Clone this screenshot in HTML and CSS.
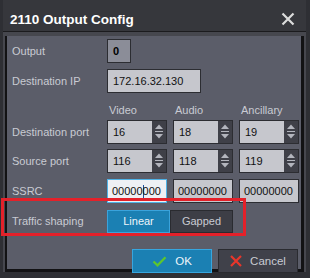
FILE: index.html
```html
<!DOCTYPE html>
<html lang="en">
  <head>
    <meta charset="UTF-8" />
    <meta name="viewport" content="width=device-width, initial-scale=1.0" />
    <title>2110 Output Config</title>
    <link rel="stylesheet" href="styles.css">
  </head>
  <body>
    <div class="dialog">
      <div class="titlebar">
        <span class="title">2110 Output Config</span>
        <svg class="close" width="14" height="14" viewBox="0 0 14 14">
          <path d="M1.5 1.5 L12.5 12.5 M12.5 1.5 L1.5 12.5" stroke="#dcdcdc" stroke-width="2.2" />
        </svg>
      </div>
      <div class="panel">
        <div class="row">
          <div class="label">Output</div>
          <div class="output-box">0</div>
        </div>
        <div class="row">
          <div class="label">Destination IP</div>
          <div class="field ip">172.16.32.130</div>
        </div>
        <div class="row heads">
          <div class="label"></div>
          <div class="head">Video</div>
          <div class="head">Audio</div>
          <div class="head">Ancillary</div>
        </div>
        <div class="row tight">
          <div class="label">Destination port</div>
          <div class="spin"><span class="val">16</span><span class="arrows"></span></div>
          <div class="spin"><span class="val">18</span><span class="arrows"></span></div>
          <div class="spin"><span class="val">19</span><span class="arrows"></span></div>
        </div>
        <div class="row">
          <div class="label">Source port</div>
          <div class="spin"><span class="val">116</span><span class="arrows"></span></div>
          <div class="spin"><span class="val">118</span><span class="arrows"></span></div>
          <div class="spin"><span class="val">119</span><span class="arrows"></span></div>
        </div>
        <div class="row">
          <div class="label">SSRC</div>
          <div class="field ssrc focused">00000<span class="caret"></span>000</div>
          <div class="field ssrc">00000000</div>
          <div class="field ssrc">00000000</div>
        </div>
        <div class="row shaping">
          <div class="label">Traffic shaping</div>
          <div class="segmented">
            <span class="seg active">Linear</span>
            <span class="seg">Gapped</span>
          </div>
        </div>
        <div class="actions">
          <button class="btn primary">
            <svg width="15" height="11" viewBox="0 0 15 11">
              <path d="M1.5 5.5 L5.5 9.3 L13.5 1.2" fill="none" stroke="#5cc52f" stroke-width="2.3" />
            </svg>
            OK
          </button>
          <button class="btn">
            <svg width="12" height="12" viewBox="0 0 12 12">
              <path d="M1 1 L11 11 M11 1 L1 11" stroke="#e8362b" stroke-width="2.2" />
            </svg>
            Cancel
          </button>
        </div>
      </div>
    </div>
    <!-- annotation drawn over the dialog -->
    <div class="highlight"></div>
  </body>
</html>
```

FILE: styles.css
```css
body {
  margin: 0;
  width: 310px;
  height: 278px;
  overflow: hidden;
  background-color: #2e2f34;
  font-family: "Liberation Sans", Arial, sans-serif;
  font-size: 11px;
  color: #c9cbd3;
}
.dialog {
  width: 303px;
  margin-left: 3px;
  background-color: #46474e;
}
.titlebar {
  height: 31px;
  border-bottom: 1px solid #1b1b1e;
  background-color: #36373c;
  display: flex;
  align-items: center;
  justify-content: space-between;
  padding: 0 11px 0 7px;
}
.title {
  color: #ffffff;
  font-weight: bold;
  font-size: 13.5px;
  margin-top: 7px;
}
.close {
  margin-top: 6px;
}
.panel {
  margin: 4px 2px 1px 2px;
  border-left: 2px solid #121214;
  border-right: 3px solid #121214;
  border-bottom: 3px solid #121214;
  background-color: #5b5d69;
  padding-top: 3px;
  box-sizing: border-box;
  height: 236px;
}
.row {
  display: flex;
  align-items: center;
  height: 24px;
  gap: 6px;
  margin-bottom: 6px;
}
.row.heads {
  height: 21px;
  margin-bottom: 0;
}
.row.tight {
  margin-bottom: 5px;
}
.row.shaping {
  margin-top: 2px;
  margin-bottom: 16px;
}
.label {
  width: 94px;
  padding-left: 5px;
  box-sizing: border-box;
  flex-shrink: 0;
  white-space: nowrap;
}
.head {
  width: 60px;
  padding-left: 2px;
  box-sizing: border-box;
}
.output-box {
  width: 24px;
  height: 24px;
  box-sizing: border-box;
  border: 1px solid #2c2d32;
  background-color: #8b8d98;
  color: #000;
  font-weight: bold;
  padding-left: 5px;
  line-height: 22px;
}
.field {
  height: 24px;
  box-sizing: border-box;
  border: 1px solid #2c2d32;
  background-color: #c6c7cd;
  color: #111;
  padding-left: 5px;
  line-height: 22px;
  white-space: nowrap;
}
.field.ip {
  width: 94px;
}
.field.ssrc {
  width: 60px;
  padding-left: 4px;
}
.field.focused {
  border-color: #4fb2e6;
  background-color: #eef0f4;
}
.caret {
  display: inline-block;
  width: 1px;
  height: 13px;
  background-color: #1c4f9a;
  vertical-align: -3px;
  margin-right: -1px;
}
.spin {
  width: 60px;
  height: 24px;
  box-sizing: border-box;
  border: 1px solid #2c2d32;
  display: flex;
  color: #111;
}
.spin .val {
  flex: 1;
  background-color: #c6c7cd;
  padding-left: 5px;
  line-height: 22px;
}
.spin .arrows {
  width: 14px;
  background-color: #3f4048;
  background-image: url("data:image/svg+xml;utf8,<svg xmlns='http://www.w3.org/2000/svg' width='14' height='22'><polygon points='3,8 7,3.5 11,8' fill='%23b3b5bd'/><rect x='3' y='10' width='8' height='1' fill='%23b3b5bd'/><polygon points='3,13 11,13 7,17.5' fill='%23b3b5bd'/></svg>");
  background-repeat: no-repeat;
}
.segmented {
  display: flex;
  height: 23px;
}
.seg {
  width: 63px;
  box-sizing: border-box;
  text-align: center;
  line-height: 21px;
  border: 1px solid #2a2b30;
  background-color: #3d3e46;
  color: #c9cbd3;
  font-size: 11px;
}
.seg.active {
  border-color: #3aa3dc;
  background-color: #1b80b3;
  color: #eef5fa;
}
.actions {
  display: flex;
  justify-content: flex-end;
  gap: 6px;
  padding-right: 3px;
}
.btn {
  width: 80px;
  height: 24px;
  box-sizing: border-box;
  border: 1px solid #2a2b30;
  background-color: #40414a;
  color: #c9cbd3;
  font-family: inherit;
  font-size: 11.5px;
  display: flex;
  align-items: center;
  justify-content: center;
  gap: 8px;
  padding: 0;
}
.btn.primary {
  border-color: #36a6df;
  background-color: #1b80b3;
  color: #eef5fa;
}
.highlight {
  position: absolute;
  left: 1px;
  top: 198px;
  width: 245px;
  height: 38px;
  box-sizing: border-box;
  border: 3px solid #e4212a;
}
```
